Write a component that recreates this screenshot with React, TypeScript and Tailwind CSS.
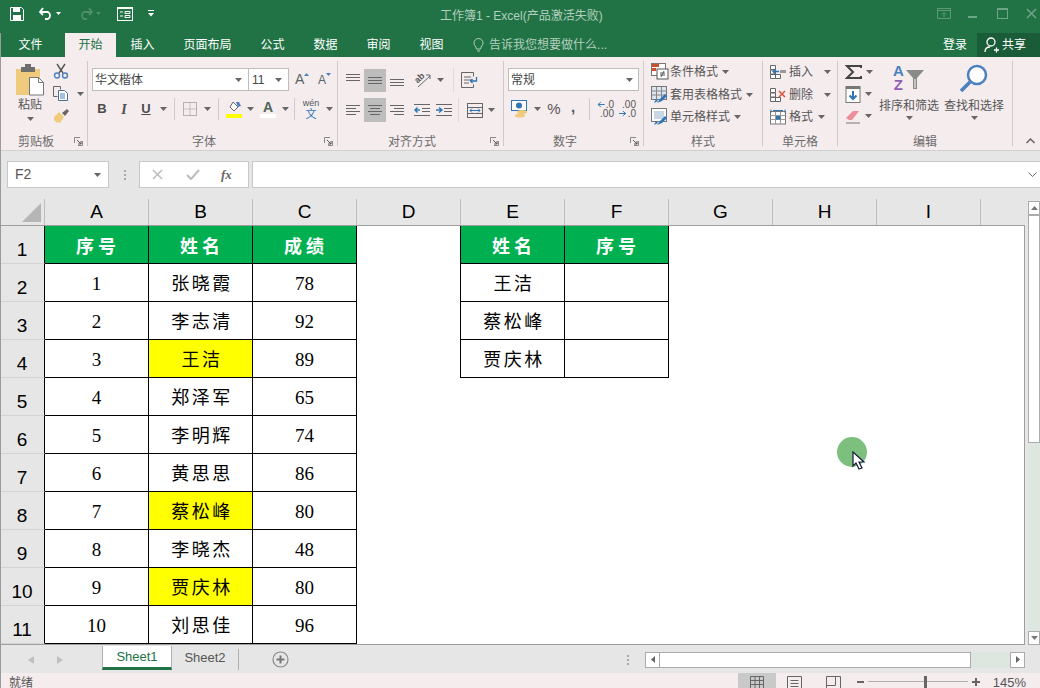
import type { ReactNode } from "react";

const sans = "font-['Liberation_Sans','Noto_Sans_CJK_SC',sans-serif]";

function Caret({ light }: { light?: boolean }) {
  return (
    <svg width="7" height="4" viewBox="0 0 7 4" className="shrink-0">
      <path d="M0 0h7L3.5 4z" fill={light ? "#4f8f68" : "#666"} />
    </svg>
  );
}

function Slot({ className, children }: { className: string; children?: ReactNode }) {
  return <div className={`flex shrink-0 items-center justify-center ${className}`}>{children}</div>;
}

function Lines({ rows }: { rows: number[][] }) {
  return (
    <svg width="16" height="14" viewBox="0 0 16 14">
      {rows.map(([a, b, y]) => (
        <path key={y} d={`M${a} ${y + 0.5}H${b}`} stroke="#666" />
      ))}
    </svg>
  );
}

function Launcher() {
  return (
    <svg width="9" height="9" viewBox="0 0 9 9" className="shrink-0">
      <path d="M.5 6V.5H6M8.5 4v4.500H4" fill="none" stroke="#888" />
      <path d="M3 3l4 4M4 7h3V4" fill="none" stroke="#555" />
    </svg>
  );
}

function Group({
  className,
  label,
  launcher,
  children,
}: {
  className: string;
  label: string;
  launcher?: boolean;
  children: ReactNode;
}) {
  return (
    <div className={`flex h-[85px] shrink-0 flex-col border-r border-[#cfc9ca] ${className}`}>
      <div className="h-[72px]">{children}</div>
      <div
        className={`relative flex h-[13px] items-center justify-center pt-[4px] text-[12px] leading-none text-[#6b6b6b] ${
          launcher ? "pr-[17px]" : ""
        }`}
      >
        {label}
        {launcher && (
          <span className="absolute right-[4px] top-[4px] flex">
            <Launcher />
          </span>
        )}
      </div>
    </div>
  );
}

function Clipboard() {
  return (
    <Group className="w-[86px]" label="剪贴板" launcher>
      <div className="flex">
        <div className="ml-[13px] flex w-[30px] flex-col items-center pt-[3px]">
          <svg width="30" height="32" viewBox="0 0 30 32">
            <rect x="1" y="5" width="24" height="26" fill="#f0cb7e" />
            <rect x="6" y="3" width="14" height="5" fill="#6d6d6d" />
            <rect x="10" y="0" width="6" height="4" fill="#6d6d6d" />
            <path d="M14.500 13.500h9l5 5v12.500h-14z" fill="#fff" stroke="#777" />
            <path d="M23.500 13.500v5h5" fill="none" stroke="#777" />
          </svg>
          <div className="text-[12px] leading-[18px] text-[#555]">粘贴</div>
          <div className="mt-[3px]">
            <Caret />
          </div>
        </div>
        <div className="ml-[8px] flex flex-col pt-[2px]">
          <svg width="16" height="16" viewBox="0 0 16 16">
            <path d="M4 1l6 9M12 1L6 10" stroke="#555" strokeWidth="1.400" fill="none" />
            <circle cx="4" cy="12.500" r="2.500" fill="none" stroke="#4a80bd" strokeWidth="1.400" />
            <circle cx="12" cy="12.500" r="2.500" fill="none" stroke="#4a80bd" strokeWidth="1.400" />
          </svg>
          <div className="mt-[7px] flex items-center">
            <svg width="16" height="15" viewBox="0 0 16 15">
              <path d="M.5.500h7v3M.5.500v10h4" fill="none" stroke="#666" />
              <path d="M5.500 4.500h6l3 3v7h-9z" fill="#fff" stroke="#4a6f94" />
              <path d="M7 8h5M7 10h5M7 12h5" stroke="#4a80bd" />
            </svg>
            <span className="ml-[8px]">
              <Caret />
            </span>
          </div>
          <svg width="17" height="16" viewBox="0 0 17 16" className="mt-[7px]">
            <path d="M1 9l5-5 5 5-4 6-2-1-1 1-2-2-1-1z" fill="#f0cb7e" />
            <path d="M9 5l5-4 2 2-4 5z" fill="#666" />
          </svg>
        </div>
      </div>
    </Group>
  );
}

function Font() {
  return (
    <Group className="w-[250px]" label="字体" launcher>
      <div className="flex items-center pl-[4px] pt-[7px]">
        <div className="flex h-[23px] w-[157px] items-center justify-between border border-[#bdbdbd] bg-white pl-[2px] pr-[6px] text-[12px] text-[#444]">
          华文楷体
          <Caret />
        </div>
        <div className="flex h-[23px] w-[40px] items-center justify-between border border-l-0 border-[#bdbdbd] bg-white pl-[3px] pr-[6px] text-[12px] text-[#444]">
          11
          <Caret />
        </div>
        <Slot className="ml-[6px] h-[20px] w-[18px] justify-start! text-[14px] text-[#566]">
          <span>A</span>
          <svg width="5" height="3" viewBox="0 0 5 3" className="mb-[10px]">
            <path d="M0 3h5L2.500 0z" fill="#4a80bd" />
          </svg>
        </Slot>
        <Slot className="ml-[5px] h-[20px] w-[18px] justify-start! text-[12px] text-[#566]">
          <span>A</span>
          <svg width="5" height="3" viewBox="0 0 5 3" className="mb-[10px]">
            <path d="M0 0h5L2.500 3z" fill="#4a80bd" />
          </svg>
        </Slot>
      </div>
      <div className="mt-[6px] flex h-[24px] items-center pl-[3px] text-[#4d4d4d]">
        <Slot className="w-[22px] text-[13px] font-bold">B</Slot>
        <Slot className="w-[22px] font-['Liberation_Serif',serif] text-[14px] font-bold italic">I</Slot>
        <Slot className="w-[22px] text-[13px] font-bold underline">U</Slot>
        <Slot className="w-[12px]">
          <Caret />
        </Slot>
        <div className="ml-[5px] h-[22px] w-px bg-[#cfc9ca]" />
        <Slot className="ml-[7px] w-[16px]">
          <svg width="14" height="14" viewBox="0 0 14 14">
            <rect x=".5" y=".5" width="13" height="13" fill="none" stroke="#777" strokeDasharray="1 1" />
            <path d="M7 .5v13M.5 7h13" stroke="#999" strokeDasharray="1 1" />
          </svg>
        </Slot>
        <Slot className="ml-[4px] w-[10px]">
          <Caret />
        </Slot>
        <div className="ml-[6px] h-[22px] w-px bg-[#cfc9ca]" />
        <div className="ml-[7px] flex w-[16px] flex-col items-center">
          <svg width="15" height="13" viewBox="0 0 15 13">
            <path d="M6 1l5 5-4 4-4-4z" fill="#fff" stroke="#666" />
            <path d="M9 1h3l2 4-3 1z" fill="#4a80bd" />
          </svg>
          <div className="h-[4px] w-[16px] bg-[#ffff00]" />
        </div>
        <Slot className="ml-[3px] w-[10px]">
          <Caret />
        </Slot>
        <div className="ml-[5px] flex w-[16px] flex-col items-center text-[14px] font-bold leading-[14px] text-[#50635a]">
          A
          <div className="h-[4px] w-[16px] bg-white" />
        </div>
        <Slot className="ml-[3px] w-[12px]">
          <Caret />
        </Slot>
        <div className="ml-[3px] h-[22px] w-px bg-[#cfc9ca]" />
        <div className="ml-[7px] flex w-[18px] flex-col items-center text-[9px] leading-[9px] text-[#555]">
          wén
          <span className="text-[11px] leading-[12px] text-[#2f75b5]">文</span>
        </div>
        <Slot className="ml-[4px] w-[10px]">
          <Caret />
        </Slot>
      </div>
    </Group>
  );
}

function Indent({ flip }: { flip?: boolean }) {
  return (
    <svg width="16" height="12" viewBox="0 0 16 12">
      <path d="M0 .5h16M0 11.500h16M8 4.500h8M8 7.500h8" stroke="#666" />
      <path d={flip ? "M0 6h5M3 3.500L6 6 3 8.500" : "M6 6H1M3.500 3.500L1 6l2.500 2.500"} stroke="#2f75b5" strokeWidth="1.500" fill="none" />
    </svg>
  );
}

function Align() {
  return (
    <Group className="w-[166px]" label="对齐方式" launcher>
      <div className="flex items-center pl-[4px] pt-[7px]">
        <Slot className="h-[23px] w-[22px]">
          <Lines rows={[[1, 15, 1], [1, 15, 4], [1, 15, 7]]} />
        </Slot>
        <Slot className="h-[23px] w-[22px] bg-[#bdbdbd]">
          <Lines rows={[[1, 15, 4], [1, 15, 7], [1, 15, 10]]} />
        </Slot>
        <Slot className="h-[23px] w-[22px]">
          <Lines rows={[[1, 15, 6], [1, 15, 9], [1, 15, 12]]} />
        </Slot>
        <Slot className="relative w-[28px]">
          <svg width="17" height="16" viewBox="0 0 17 16">
            <path d="M4 15L16 4M12 3h4v4" fill="none" stroke="#666" />
          </svg>
          <span className="absolute left-[6px] top-[0px] -rotate-45 text-[9px] font-bold leading-[12px] text-[#555]">ab</span>
        </Slot>
        <Slot className="w-[8px]">
          <Caret />
        </Slot>
        <div className="ml-[9px] h-[24px] w-px bg-[#e0d8da]" />
        <Slot className="ml-[7px] w-[17px]">
          <svg width="17" height="16" viewBox="0 0 17 16">
            <path d="M.5.500h12v4M.5.500v15h12v-3" fill="none" stroke="#666" />
            <path d="M3 5h7M3 8h8M3 11h5" stroke="#666" />
            <path d="M15.500 5v4h-6M11.500 7l-2 2 2 2" fill="none" stroke="#2f75b5" strokeWidth="1.300" />
          </svg>
        </Slot>
      </div>
      <div className="mt-[6px] flex items-center pl-[4px]">
        <Slot className="h-[24px] w-[22px]">
          <Lines rows={[[1, 15, 2], [1, 11, 5], [1, 15, 8], [1, 11, 11]]} />
        </Slot>
        <Slot className="h-[24px] w-[22px] bg-[#bdbdbd]">
          <Lines rows={[[1, 15, 2], [3, 13, 5], [1, 15, 8], [3, 13, 11]]} />
        </Slot>
        <Slot className="h-[24px] w-[22px]">
          <Lines rows={[[1, 15, 2], [5, 15, 5], [1, 15, 8], [5, 15, 11]]} />
        </Slot>
        <Slot className="ml-[6px] w-[16px]">
          <Indent />
        </Slot>
        <Slot className="ml-[6px] w-[16px]">
          <Indent flip />
        </Slot>
        <div className="ml-[6px] h-[24px] w-px bg-[#e0d8da]" />
        <Slot className="ml-[8px] w-[16px]">
          <svg width="16" height="15" viewBox="0 0 16 15">
            <rect x=".5" y=".5" width="15" height="14" fill="none" stroke="#666" />
            <path d="M.5 4.500h15M.5 10.500h15" stroke="#666" />
            <path d="M3 7.500h10M5 5.500l-2 2 2 2M11 5.500l2 2-2 2" fill="none" stroke="#2f75b5" />
          </svg>
        </Slot>
        <Slot className="ml-[4px] w-[8px]">
          <Caret />
        </Slot>
      </div>
    </Group>
  );
}

function NumberGroup() {
  return (
    <Group className="w-[140px]" label="数字" launcher>
      <div className="pl-[4px] pt-[7px]">
        <div className="flex h-[23px] w-[131px] items-center justify-between border border-[#bdbdbd] bg-white pl-[2px] pr-[5px] text-[12px] text-[#444]">
          常规
          <Caret />
        </div>
      </div>
      <div className="mt-[6px] flex h-[24px] items-center pl-[6px] text-[#555]">
        <Slot className="w-[20px]">
          <svg width="18" height="18" viewBox="0 0 18 18">
            <rect x=".5" y=".5" width="15" height="10" fill="#fff" stroke="#2f75b5" />
            <circle cx="8" cy="5.500" r="3" fill="#2f75b5" />
            <ellipse cx="11" cy="12" rx="5" ry="2" fill="#f0cb7e" />
            <ellipse cx="9" cy="15.500" rx="5" ry="2" fill="#f0cb7e" />
          </svg>
        </Slot>
        <Slot className="ml-[2px] w-[10px]">
          <Caret />
        </Slot>
        <Slot className="ml-[3px] w-[18px] text-[15px]">%</Slot>
        <Slot className="ml-[3px] w-[14px] pb-[3px] text-[15px] font-bold">,</Slot>
        <div className="ml-[9px] h-[22px] w-px bg-[#cfc9ca]" />
        <div className="ml-[7px] flex w-[17px] flex-col text-[10px] leading-[9px]">
          <span className="flex items-center justify-end">
            <svg width="8" height="7" viewBox="0 0 8 7" className="mr-[1px]">
              <path d="M8 3.500H1M4 1L1 3.500 4 6" fill="none" stroke="#2f75b5" />
            </svg>
            .0
          </span>
          <span className="text-right">.00</span>
        </div>
        <div className="ml-[5px] flex w-[17px] flex-col text-[10px] leading-[9px]">
          <span className="text-right">.00</span>
          <span className="flex items-center justify-end">
            <svg width="8" height="7" viewBox="0 0 8 7" className="mr-[1px]">
              <path d="M0 3.500h7M4 1l3 2.500L4 6" fill="none" stroke="#2f75b5" />
            </svg>
            .0
          </span>
        </div>
      </div>
    </Group>
  );
}

function StyleIcon({ kind }: { kind: number }) {
  return (
    <svg width="18" height="18" viewBox="0 0 18 18">
      {kind === 0 ? (
        <>
          <rect x=".5" y=".5" width="14" height="12" fill="#fff" stroke="#777" />
          <rect x="1" y="1" width="7" height="3" fill="#c8502c" />
          <rect x="1" y="5" width="4" height="3" fill="#c8502c" />
          <rect x="6" y="6" width="11" height="10" fill="#fff" stroke="#555" />
          <path d="M9 10h5M9 12h5M13 8l-3 6" stroke="#555" fill="none" />
        </>
      ) : (
        <>
          <rect x=".5" y=".5" width="15" height="13" fill={kind === 1 ? "#dbe4ef" : "#fff"} stroke="#777" />
          {kind === 1 ? (
            <path d="M.5 5h15M.5 9h15M5.500 1v13M10.500 1v13" stroke="#888" />
          ) : (
            <rect x="3" y="3" width="10" height="8" fill="#c9d6e6" />
          )}
          <path d="M6 17l3-4 5-5 2 2-5 5z" fill="#2f75b5" />
          <path d="M3 17l4-2-2-2z" fill="#2f75b5" />
        </>
      )}
    </svg>
  );
}

function Styles() {
  const items = [
    { t: "条件格式", k: 0 },
    { t: "套用表格格式", k: 1 },
    { t: "单元格样式", k: 2 },
  ];
  return (
    <Group className="w-[119px]" label="样式">
      <div className="flex flex-col pl-[7px]">
        {items.map((it) => (
          <div key={it.t} className="flex h-[22.500px] items-center gap-[1px] text-[12px] text-[#555]">
            <Slot className="w-[18px]">
              <StyleIcon kind={it.k} />
            </Slot>
            <span>{it.t}</span>
            <span className="ml-[3px]">
              <Caret />
            </span>
          </div>
        ))}
      </div>
    </Group>
  );
}

function CellIcon({ kind }: { kind: number }) {
  const grid = "M.5 1.500h5v4h-5zM.5 10.500h5v4h-5zM5.500 10.500h5v4h-5z";
  return (
    <svg width="17" height="16" viewBox="0 0 17 16">
      {kind < 2 ? (
        <>
          <path d={grid} fill="#fff" stroke="#666" />
          <path d="M.5 6h5v4h-5z" fill="#fff" stroke="#666" />
          {kind === 0 ? (
            <>
              <rect x="10" y="6" width="6" height="3" fill="#999" />
              <path d="M9 7.500H3M5.500 5L3 7.500 5.500 10" stroke="#2f75b5" strokeWidth="1.300" fill="none" />
            </>
          ) : (
            <path d="M9 4l6 6M15 4l-6 6" stroke="#d8543f" strokeWidth="1.500" />
          )}
        </>
      ) : (
        <>
          <rect x=".5" y="2.500" width="15" height="12.500" fill="#fff" stroke="#777" />
          <path d="M.5 6.500h15M.5 10.500h15M5.500 3v12M10.500 3v12" stroke="#999" />
          <path d="M1 .5v3M15 .5v3M3 1.500h10" stroke="#2f75b5" />
          <rect x="6" y="7" width="4.500" height="3.500" fill="#2f75b5" />
        </>
      )}
    </svg>
  );
}

function Cells() {
  const items = [
    { t: "插入", k: 0, gap: "ml-[9px]" },
    { t: "删除", k: 1, gap: "ml-[9px]" },
    { t: "格式", k: 2, gap: "ml-[3px]" },
  ];
  return (
    <Group className="w-[75px]" label="单元格">
      <div className="flex flex-col pl-[7px]">
        {items.map((it) => (
          <div key={it.t} className="flex h-[22.500px] items-center gap-[2px] text-[12px] text-[#555]">
            <Slot className="w-[17px]">
              <CellIcon kind={it.k} />
            </Slot>
            <span>{it.t}</span>
            <span className={it.gap}>
              <Caret />
            </span>
          </div>
        ))}
      </div>
    </Group>
  );
}

function Edit() {
  return (
    <Group className="w-[175px]" label="编辑">
      <div className="flex">
        <div className="flex flex-col pl-[7px]">
          <div className="flex h-[22px] items-center gap-[4px]">
            <svg width="17" height="15" viewBox="0 0 17 15">
              <path d="M16 3V1H2l6 6-6 6h14v-2" fill="none" stroke="#444" strokeWidth="2" />
            </svg>
            <Caret />
          </div>
          <div className="flex h-[22px] items-center gap-[4px]">
            <svg width="16" height="17" viewBox="0 0 16 17">
              <rect x="1" y=".5" width="14" height="16" fill="#fff" stroke="#777" />
              <rect x="1" y="0" width="14" height="3" fill="#777" />
              <path d="M8 5v8M4.500 9.500L8 13l3.500-3.500" fill="none" stroke="#2f75b5" strokeWidth="2" />
            </svg>
            <Caret />
          </div>
          <div className="flex h-[22px] items-center gap-[4px]">
            <svg width="16" height="15" viewBox="0 0 16 15">
              <path d="M1 9l7-7 6 0-7 9H4z" fill="#ec8d97" />
              <path d="M1 14h14" stroke="#777" />
            </svg>
            <Caret />
          </div>
        </div>
        <div className="ml-[6px] flex w-[60px] flex-col items-center pt-[3px]">
          <div className="flex h-[28px] w-[32px] items-start text-[15px] font-bold leading-[14px]">
            <div className="flex flex-col items-center">
              <span className="text-[#4a80bd]">A</span>
              <span className="text-[#8e5fb4]">Z</span>
            </div>
            <svg width="18" height="20" viewBox="0 0 18 20" className="ml-[2px] mt-[6px]">
              <path d="M0 0h18l-7 8v11H7V8z" fill="#8a8a8a" />
              <path d="M8.500 9h1v9h-1z" fill="#fff" />
            </svg>
          </div>
          <div className="mt-[5px] whitespace-nowrap text-[12px] leading-[18px] text-[#555]">排序和筛选</div>
          <div className="mt-[1px]">
            <Caret />
          </div>
        </div>
        <div className="ml-[5px] flex w-[60px] flex-col items-center pt-[3px]">
          <svg width="30" height="28" viewBox="0 0 30 28">
            <circle cx="18" cy="11" r="9" fill="#fff" stroke="#4a80bd" strokeWidth="2.500" />
            <path d="M11 18L2 27" stroke="#4a80bd" strokeWidth="3.500" />
          </svg>
          <div className="mt-[5px] whitespace-nowrap text-[12px] leading-[18px] text-[#555]">查找和选择</div>
          <div className="mt-[1px]">
            <Caret />
          </div>
        </div>
      </div>
    </Group>
  );
}

function Ribbon() {
  return (
    <div className="flex h-[94px] shrink-0 border-b border-[#d0d0d0] bg-[#f5ecee] pt-[4px]">
      <div className="w-[2px]" />
      <Clipboard />
      <Font />
      <Align />
      <NumberGroup />
      <Styles />
      <Cells />
      <Edit />
      <div className="flex flex-1 items-end justify-end pb-[6px] pr-[5px]">
        <svg width="9" height="6" viewBox="0 0 9 6">
          <path d="M.5 5l4-4 4 4" fill="none" stroke="#666" strokeWidth="1.500" />
        </svg>
      </div>
    </div>
  );
}

function TitleBar() {
  return (
    <div className="flex h-[33px] shrink-0 items-center bg-[#217346]">
      <div className="flex w-[440px] items-center pb-[6px] pl-[10px]">
        <svg width="14" height="14" viewBox="0 0 14 14">
          <path d="M.5.500h11l2 2v11H.5z" fill="none" stroke="#fff" />
          <rect x="3" y="1" width="7" height="4" fill="#fff" />
          <rect x="3" y="8" width="8" height="5" fill="#fff" />
        </svg>
        <svg width="14" height="13" viewBox="0 0 14 13" className="ml-[15px]">
          <path d="M1 5h8a4 4 0 010 7H6M4 1L1 5l3 3" fill="none" stroke="#fff" strokeWidth="1.800" />
        </svg>
        <span className="ml-[3px]">
          <svg width="5" height="3" viewBox="0 0 5 3">
            <path d="M0 0h5L2.500 3z" fill="#fff" />
          </svg>
        </span>
        <svg width="14" height="13" viewBox="0 0 14 13" className="ml-[18px]">
          <path d="M13 5H5a4 4 0 000 7h3M10 1l3 4-3 3" fill="none" stroke="#4f8f68" strokeWidth="1.800" />
        </svg>
        <span className="ml-[3px]">
          <svg width="5" height="3" viewBox="0 0 5 3">
            <path d="M0 0h5L2.500 3z" fill="#4f8f68" />
          </svg>
        </span>
        <svg width="16" height="14" viewBox="0 0 16 14" className="ml-[16px]">
          <rect x=".5" y=".5" width="15" height="13" fill="#217346" stroke="#fff" />
          <rect x="0" y="0" width="16" height="2" fill="#fff" />
          <path d="M3 5h3M3 9h3M8 4.500h5v2H8zM8 8.500h5v2H8z" fill="none" stroke="#fff" />
        </svg>
        <svg width="6" height="7" viewBox="0 0 6 7" className="ml-[15px]">
          <path d="M0 .5h6" stroke="#fff" />
          <path d="M0 3h6L3 6.500z" fill="#fff" />
        </svg>
      </div>
      <div className="pb-[1px] text-[12px] text-[#b4cfbe]">工作簿1 - Excel(产品激活失败)</div>
      <div className="ml-auto flex items-center pb-[6px] pr-[3px]">
        <svg width="14" height="11" viewBox="0 0 14 11">
          <path d="M.5.500h13v10H.5zM1 2.500h12" fill="none" stroke="#5d9a77" />
          <path d="M7 9V5M5 6.500L7 4.500l2 2" fill="none" stroke="#5d9a77" />
        </svg>
        <div className="ml-[17px] h-[2px] w-[9px] translate-y-[3px] bg-[#6ea488]" />
        <div className="ml-[20px] h-[11px] w-[11px] border border-t-2 border-[#6ea488]" />
        <svg width="11" height="11" viewBox="0 0 11 11" className="ml-[18px]">
          <path d="M1 1l9 9M10 1l-9 9" stroke="#6ea488" strokeWidth="1.500" />
        </svg>
      </div>
    </div>
  );
}

function Tabs() {
  const tabs = ["插入", "页面布局", "公式", "数据", "审阅", "视图"];
  return (
    <div className="flex h-[24px] shrink-0 items-stretch bg-[#217346] text-[12px] text-white">
      <div className="flex w-[65px] items-center justify-center pr-[4px]">文件</div>
      <div className="flex w-[51px] items-center justify-center bg-[#f5ecee] text-[#217346]">开始</div>
      {tabs.map((t) => (
        <div key={t} className="flex items-center px-[14.500px]">
          {t}
        </div>
      ))}
      <div className="ml-[15px] flex items-center gap-[5px] text-[#b4cfbe]">
        <svg width="11" height="15" viewBox="0 0 11 15">
          <path d="M3.500 11C3 8 1 7.500 1 5a4.500 4.500 0 019 0c0 2.500-2 3-2.500 6zM4 13h3" fill="none" stroke="#b4cfbe" />
        </svg>
        告诉我您想要做什么...
      </div>
      <div className="ml-auto flex items-center pr-[10px]">登录</div>
      <div className="flex w-[63px] items-center gap-[3px] bg-[#1b5c38] pl-[7px]">
        <svg width="15" height="16" viewBox="0 0 15 16">
          <circle cx="7" cy="5" r="4" fill="none" stroke="#fff" strokeWidth="1.300" />
          <path d="M1 15c0-3 2-5 5-5M10 13h5M12.500 10.500v5" fill="none" stroke="#fff" strokeWidth="1.300" />
        </svg>
        共享
      </div>
    </div>
  );
}

function FormulaBar() {
  return (
    <div className="flex h-[48px] shrink-0 items-start bg-[#e6e6e6] pl-[7px] pt-[10px]">
      <div className="flex h-[27px] w-[102px] items-center justify-between border border-[#c8c8c8] bg-white pl-[7px] pr-[7px] text-[14px] text-[#555]">
        F2
        <Caret />
      </div>
      <div className="ml-[15px] flex h-[27px] flex-col justify-center gap-[2px]">
        <div className="h-[2px] w-[2px] bg-[#aaa]" />
        <div className="h-[2px] w-[2px] bg-[#aaa]" />
        <div className="h-[2px] w-[2px] bg-[#aaa]" />
      </div>
      <div className="ml-[13px] flex h-[27px] w-[110px] items-center border border-[#c8c8c8] bg-white pl-[12px]">
        <svg width="11" height="11" viewBox="0 0 11 11">
          <path d="M1 1l9 9M10 1l-9 9" stroke="#bdbdbd" strokeWidth="1.500" />
        </svg>
        <svg width="14" height="11" viewBox="0 0 14 11" className="ml-[23px]">
          <path d="M1 6l4 4 8-9" fill="none" stroke="#bdbdbd" strokeWidth="2" />
        </svg>
        <span className="ml-[21px] font-['Liberation_Serif',serif] text-[13px] font-bold italic text-[#666]">fx</span>
      </div>
      <div className="ml-[3px] flex h-[27px] flex-1 items-center justify-end border-y border-l border-[#c8c8c8] bg-white pr-[3px]">
        <svg width="9" height="5" viewBox="0 0 9 5">
          <path d="M.5.500l4 4 4-4" fill="none" stroke="#666" />
        </svg>
      </div>
    </div>
  );
}

const colWidths = ["A", "B", "C", "D", "E", "F", "G", "H", "I"];

type Row = { a: string; b: string; c: string; mark?: boolean; e?: string };

const rows: Row[] = [
  { a: "1", b: "张晓霞", c: "78", e: "王洁" },
  { a: "2", b: "李志清", c: "92", e: "蔡松峰" },
  { a: "3", b: "王洁", c: "89", mark: true, e: "贾庆林" },
  { a: "4", b: "郑泽军", c: "65" },
  { a: "5", b: "李明辉", c: "74" },
  { a: "6", b: "黄思思", c: "86" },
  { a: "7", b: "蔡松峰", c: "80", mark: true },
  { a: "8", b: "李晓杰", c: "48" },
  { a: "9", b: "贾庆林", c: "80", mark: true },
  { a: "10", b: "刘思佳", c: "96" },
];

const cellBase =
  "flex h-[38px] w-[104px] shrink-0 items-center justify-center border-b border-r border-black font-['Liberation_Serif','Noto_Sans_CJK_SC',serif]";
const headCell = `${cellBase} bg-[#00b050] pl-[3px] pt-[5px] text-[18px] font-bold tracking-[4px] text-white`;
const nameCell = `${cellBase} pl-[3px] pt-[4px] text-[18px] tracking-[2.500px] text-black`;

function RowHead({ n }: { n: number }) {
  return (
    <div className="flex h-[38px] w-[45px] shrink-0 items-end justify-center border-r border-b border-r-black border-b-[#d4d4d4] bg-[#e6e6e6] text-[19px] leading-[26px] text-black">
      {n}
    </div>
  );
}

function Sheet() {
  return (
    <div className="flex h-[447px] shrink-0 bg-[#e6e6e6]">
      <div className="flex w-[1025px] flex-col">
        <div className="flex h-[27px] shrink-0 border-b border-[#9e9e9e]">
          <div className="flex w-[45px] shrink-0 items-end justify-end border-r border-[#bdbdbd] pb-[3px] pr-[3px]">
            <svg width="19" height="19" viewBox="0 0 19 19">
              <path d="M19 0v19H0z" fill="#b5b5b5" />
            </svg>
          </div>
          {colWidths.map((c) => (
            <div
              key={c}
              className="flex w-[104px] shrink-0 items-center justify-center border-r border-[#bdbdbd] pt-[1px] text-[19px] text-black"
            >
              {c}
            </div>
          ))}
        </div>
        <div className="flex h-[419px] flex-col overflow-hidden border-r border-b border-[#9e9e9e] bg-white">
          <div className="flex">
            <RowHead n={1} />
            {["序号", "姓名", "成绩"].map((t) => (
              <div key={t} className={headCell}>
                {t}
              </div>
            ))}
            <div className="h-[38px] w-[104px] shrink-0 border-r border-black" />
            {["姓名", "序号"].map((t) => (
              <div key={t} className={headCell}>
                {t}
              </div>
            ))}
          </div>
          {rows.map((r, i) => (
            <div key={r.a} className="flex">
              <RowHead n={i + 2} />
              <div className={`${cellBase} pt-[4px] text-[19px] text-black`}>{r.a}</div>
              <div className={`${nameCell} ${r.mark ? "bg-[#ffff00]" : ""}`}>{r.b}</div>
              <div className={`${cellBase} pt-[4px] text-[19px] text-black`}>{r.c}</div>
              {r.e && (
                <>
                  <div className="h-[38px] w-[104px] shrink-0 border-r border-black" />
                  <div className={nameCell}>{r.e}</div>
                  <div className={cellBase} />
                </>
              )}
            </div>
          ))}
        </div>
      </div>
      <div className="ml-[3px] mt-[2px] flex h-[444px] w-[12px] flex-col">
        <div className="flex h-[15px] items-center justify-center border-x border-t border-b-2 border-[#ababab] bg-white">
          <svg width="7" height="4" viewBox="0 0 7 4">
            <path d="M0 4h7L3.500 0z" fill="#777" />
          </svg>
        </div>
        <div className="h-[227px] border-x border-b border-[#ababab] bg-white" />
        <div className="flex-1 bg-[#dde7df]" />
        <div className="flex h-[14px] items-center justify-center border border-[#ababab] bg-white">
          <svg width="7" height="4" viewBox="0 0 7 4">
            <path d="M0 0h7L3.500 4z" fill="#777" />
          </svg>
        </div>
      </div>
    </div>
  );
}

function SheetTabs() {
  return (
    <div className="flex h-[27px] shrink-0 items-stretch bg-[#e6e6e6] text-[13px]">
      <div className="flex w-[102px] items-center pl-[28px]">
        <svg width="6" height="8" viewBox="0 0 6 8">
          <path d="M6 0v8L0 4z" fill="#c0c0c0" />
        </svg>
        <svg width="6" height="8" viewBox="0 0 6 8" className="ml-[23px]">
          <path d="M0 0v8l6-4z" fill="#c0c0c0" />
        </svg>
      </div>
      <div className="mb-[3px] flex w-[70px] items-center justify-center border-x border-b-[3px] border-x-[#b0b0b0] border-b-[#217346] bg-white text-[#217346]">
        Sheet1
      </div>
      <div className="my-[3px] flex w-[67px] items-center justify-center border-r border-[#b0b0b0] pb-[3px] text-[#555]">
        Sheet2
      </div>
      <div className="ml-[33px] flex items-center pb-[1px]">
        <svg width="17" height="17" viewBox="0 0 17 17">
          <circle cx="8.500" cy="8.500" r="7.500" fill="none" stroke="#8a8a8a" strokeWidth="1.200" />
          <path d="M8.500 4.500v8M4.500 8.500h8" stroke="#777" strokeWidth="2" />
        </svg>
      </div>
      <div className="ml-[338px] flex flex-col justify-center gap-[2px]">
        <div className="h-[2px] w-[2px] bg-[#aaa]" />
        <div className="h-[2px] w-[2px] bg-[#aaa]" />
        <div className="h-[2px] w-[2px] bg-[#aaa]" />
      </div>
      <div className="ml-[16px] flex h-[16px] w-[380px] self-center">
        <div className="flex w-[15px] items-center justify-center border border-[#ababab] bg-white">
          <svg width="4" height="7" viewBox="0 0 4 7">
            <path d="M4 0v7L0 3.500z" fill="#666" />
          </svg>
        </div>
        <div className="w-[311px] border-y border-r border-[#ababab] bg-white" />
        <div className="flex-1 bg-[#dde7df]" />
        <div className="flex w-[15px] items-center justify-center border border-[#ababab] bg-white">
          <svg width="4" height="7" viewBox="0 0 4 7">
            <path d="M0 0v7l4-3.500z" fill="#666" />
          </svg>
        </div>
      </div>
    </div>
  );
}

function StatusBar() {
  return (
    <div className="flex h-[15px] shrink-0 items-start overflow-hidden bg-[#f5ecee] text-[12px] leading-[16px] text-[#555]">
      <span className="ml-[9px] mt-[2px]">就绪</span>
      <div className="ml-auto flex h-full items-start">
        <div className="flex h-[15px] w-[38px] justify-center bg-[#c9c9c9] pt-[3px]">
          <svg width="14" height="13" viewBox="0 0 14 13">
            <path d="M.5 13V.5h13V13M.5 4.500h13M.5 8.500h13M5 1v12M9.500 1v12" fill="none" stroke="#666" />
          </svg>
        </div>
        <svg width="15" height="13" viewBox="0 0 15 13" className="ml-[11px] mt-[3px]">
          <path d="M.5 13V.5h14V13M3.500 4.500h8M3.500 7.500h8M3.500 10.500h8" fill="none" stroke="#666" />
        </svg>
        <svg width="15" height="13" viewBox="0 0 15 13" className="ml-[24px] mt-[3px]">
          <path d="M.5 13V.5h14V13M.5 9.500h9V1" fill="none" stroke="#666" />
        </svg>
        <div className="ml-[16px] mt-[8px] h-[2px] w-[7px] bg-[#666]" />
        <div className="relative ml-[4px] mt-[8px] h-px w-[100px] bg-[#b0b0b0]">
          <div className="absolute left-[56px] top-[-5px] h-[12px] w-[3px] bg-[#666]" />
        </div>
        <div className="relative ml-[4px] mt-[8px] h-[2px] w-[8px] bg-[#666]">
          <div className="absolute left-[3px] top-[-3px] h-[8px] w-[2px] bg-[#666]" />
        </div>
        <span className="ml-[13px] mr-[14px] mt-[2px] text-[13px]">145%</span>
      </div>
    </div>
  );
}

export default function App() {
  return (
    <div className={`relative flex h-[688px] w-[1040px] flex-col overflow-hidden bg-white ${sans}`}>
      <TitleBar />
      <Tabs />
      <Ribbon />
      <FormulaBar />
      <Sheet />
      <SheetTabs />
      <StatusBar />
      <div className="absolute left-0 top-[33px] h-[655px] w-px bg-[#9a9a9a]" />
      <div className="absolute left-[837px] top-[437px] h-[30px] w-[30px] rounded-full bg-[#7dbf7d]" />
      <svg width="14" height="20" viewBox="0 0 14 20" className="absolute left-[852px] top-[451px]">
        <path d="M1 1v14l3-3 3 6 3-1-3-6h5z" fill="#fff" stroke="#1a1a40" strokeWidth="1.200" />
      </svg>
    </div>
  );
}
